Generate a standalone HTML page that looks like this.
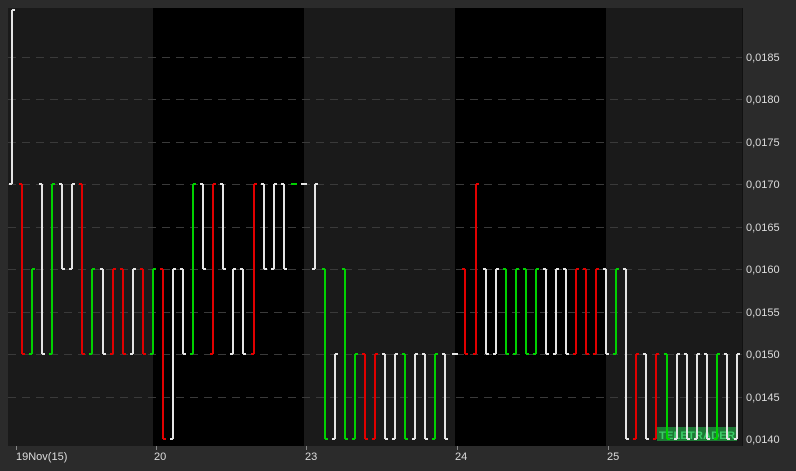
<!DOCTYPE html>
<html><head><meta charset="utf-8"><style>
html,body{margin:0;padding:0;background:#2b2b2b;width:796px;height:471px;overflow:hidden;font-family:"Liberation Sans",sans-serif;}
svg{display:block}
</style></head><body>
<svg id="s" width="796" height="471" xmlns="http://www.w3.org/2000/svg">
<rect x="0" y="0" width="796" height="471" fill="#2b2b2b"/>
<rect x="8" y="8" width="734" height="438" fill="#1a1a1a"/>
<rect x="153" y="8" width="151" height="438" fill="#000"/>
<rect x="455" y="8" width="151" height="438" fill="#000"/>
<line x1="742.5" y1="8" x2="742.5" y2="446" stroke="#111" stroke-width="1"/>
<g id="grid" stroke="#3a3a3a" stroke-width="1" stroke-dasharray="8,6"></g>
<rect x="657" y="427" width="80" height="14" fill="#1f8a3a" opacity="0.85"/>
<text x="697" y="439" font-size="11" fill="#3ccc66" text-anchor="middle" font-weight="bold" textLength="76" lengthAdjust="spacingAndGlyphs">TELETRADER</text>
<g id="bars" stroke-width="2" fill="none"></g>
<g font-size="11" fill="#dcdcdc">
<text x="746" y="61">0,0185</text>
<text x="746" y="103">0,0180</text>
<text x="746" y="146">0,0175</text>
<text x="746" y="188">0,0170</text>
<text x="746" y="231">0,0165</text>
<text x="746" y="273">0,0160</text>
<text x="746" y="316">0,0155</text>
<text x="746" y="358">0,0150</text>
<text x="746" y="401">0,0145</text>
<text x="746" y="443">0,0140</text>
<text x="16" y="460">19Nov(15)</text>
<text x="154" y="460">20</text>
<text x="305" y="460">23</text>
<text x="455" y="460">24</text>
<text x="607" y="460">25</text>
</g>
<g stroke="#888" stroke-width="1">
<line x1="16.5" y1="446" x2="16.5" y2="450"/><line x1="156.5" y1="446" x2="156.5" y2="450"/>
<line x1="306.5" y1="446" x2="306.5" y2="450"/><line x1="457.5" y1="446" x2="457.5" y2="450"/>
<line x1="608.5" y1="446" x2="608.5" y2="450"/>
</g>
</svg>
<script>
var Y={140:439,145:396.6,150:354,155:311.6,160:269,165:226.7,170:184,175:141.7,180:99,185:57,190:10};
var g=document.getElementById('grid'),ns='http://www.w3.org/2000/svg';
[145,150,155,160,165,170,175,180,185].forEach(function(p){var l=document.createElementNS(ns,'line');l.setAttribute('x1',8);l.setAttribute('x2',742);l.setAttribute('y1',Math.round(Y[p])+.5);l.setAttribute('y2',Math.round(Y[p])+.5);g.appendChild(l);});
var C={w:'#e4e4e4',r:'#e00000',g:'#00d000'};
var d=[[12,190,170,'w'],[22,170,150,'r'],[32,160,150,'g'],[42,170,150,'w'],[52,170,150,'g'],[62,170,160,'w'],[72,170,160,'w'],[82,170,150,'r'],[92,160,150,'g'],[103,160,150,'w'],[113,160,150,'r'],[123,160,150,'r'],[133,160,150,'w'],[143,160,150,'r'],[153,160,150,'g'],[163,160,140,'r'],[173,160,140,'w'],[183,160,150,'w'],[193,170,150,'g'],[203,170,160,'w'],[213,170,150,'r'],[223,170,160,'w'],[233,160,150,'w'],[243,160,150,'w'],[254,170,150,'r'],[264,170,160,'w'],[274,170,160,'w'],[284,170,160,'w'],[294,170,170,'g'],[304,170,170,'w'],[315,170,160,'w'],[325,160,140,'g'],[335,150,140,'w'],[345,160,140,'g'],[355,150,140,'g'],[365,150,140,'r'],[375,150,140,'r'],[385,150,140,'w'],[395,150,140,'w'],[405,150,140,'g'],[415,150,140,'w'],[425,150,140,'w'],[435,150,140,'g'],[445,150,140,'w'],[455,150,150,'w'],[465,160,150,'r'],[476,170,150,'r'],[486,160,150,'w'],[496,160,150,'w'],[506,160,150,'g'],[516,160,150,'g'],[526,160,150,'g'],[536,160,150,'g'],[546,160,150,'w'],[556,160,150,'w'],[566,160,150,'w'],[576,160,150,'r'],[586,160,150,'r'],[596,160,150,'r'],[606,160,150,'w'],[616,160,150,'g'],[626,160,140,'w'],[636,150,140,'r'],[646,150,140,'w'],[656,150,140,'r'],[667,150,140,'g'],[677,150,140,'w'],[687,150,140,'w'],[697,150,140,'w'],[707,150,140,'w'],[717,150,140,'g'],[727,150,140,'w'],[737,150,140,'w']];
var b=document.getElementById('bars'),s='';
d.forEach(function(e,i){var x=e[0],h=Y[e[1]],l=Y[e[2]],c=C[e[3]];
var o=(i%2?h:l),cl=(i%2?l:h);
s+='<path stroke="'+c+'" d="M'+x+' '+h+'V'+l+'M'+(x-3)+' '+o+'H'+x+'M'+x+' '+cl+'H'+(x+3)+'"/>';});
b.innerHTML=s;
</script>
</body></html>
